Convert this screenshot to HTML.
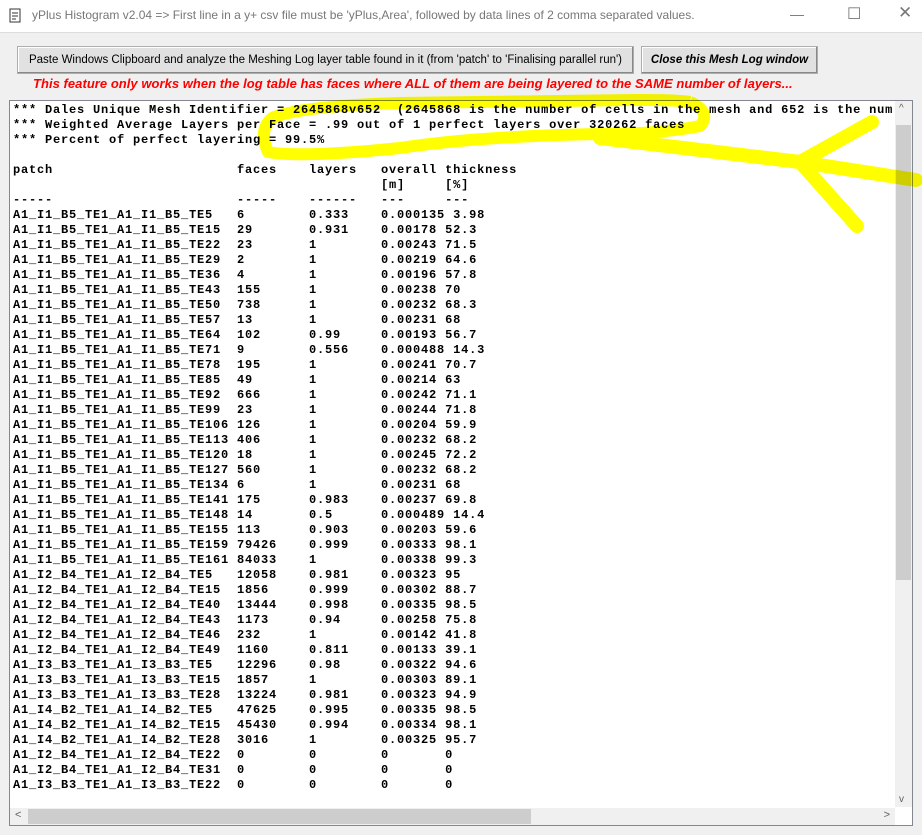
<!DOCTYPE html>
<html><head><meta charset="utf-8"><style>
body{margin:0;width:922px;height:835px;background:#f0f0f0;position:relative;overflow:hidden;font-family:"Liberation Sans",sans-serif}
.title{position:absolute;left:0;top:0;width:922px;height:32px;background:#fff;border-bottom:1px solid #ddd}
.title span{position:absolute;left:32px;top:8px;font-size:12px;color:#777}
.btn{position:absolute;background:#e1e1e1;border:1px solid #adadad;font-size:11.5px;text-align:center;line-height:26px;box-shadow:inset -1px -1px #888,inset 1px 1px #fff}
.red{position:absolute;left:33px;top:76px;color:#f00;font-weight:bold;font-style:italic;font-size:13px;letter-spacing:0.04px}
.box{position:absolute;left:9px;top:100px;width:902px;height:724px;background:#fff;border:1px solid #828790;overflow:hidden}
pre{position:absolute;left:3px;top:2px;margin:0;font-family:"Liberation Mono",monospace;font-size:12px;letter-spacing:0.8px;line-height:15px;font-weight:bold;color:#000;white-space:pre}
.vs{position:absolute;right:0;top:0;width:17px;height:706px;background:#f0f0f0}
.vt{position:absolute;left:1px;top:24px;width:15px;height:455px;background:#cdcdcd}
.hs{position:absolute;left:0;bottom:0;width:885px;height:17px;background:#f0f0f0}
.ht{position:absolute;left:18px;top:1px;width:503px;height:15px;background:#cdcdcd}
</style></head><body>
<div class="title"><svg style="position:absolute;left:8px;top:8px" width="14" height="16"><rect x="2" y="1" width="10" height="13" fill="#fff" stroke="#333"/><path d="M4 5h6M4 8h6M4 11h4" stroke="#333"/></svg><span>yPlus Histogram v2.04 =&gt; First line in a y+ csv file must be 'yPlus,Area', followed by data lines of 2 comma separated values.</span>
<span style="left:790px;top:6px;font-size:14px">—</span><span style="left:847px;top:4px;font-size:16px">☐</span><span style="left:898px;top:3px;font-size:17px">✕</span></div>
<div class="btn" style="left:17px;top:46px;width:615px;height:26px">Paste Windows Clipboard and analyze the Meshing Log layer table found in it (from 'patch' to 'Finalising parallel run')</div>
<div class="btn" style="left:641px;top:46px;width:175px;height:26px;font-weight:bold;font-style:italic">Close this Mesh Log window</div>
<div class="red">This feature only works when the log table has faces where ALL of them are being layered to the SAME number of layers...</div>
<div class="box">
<pre>*** Dales Unique Mesh Identifier = 2645868v652  (2645868 is the number of cells in the mesh and 652 is the num
*** Weighted Average Layers per Face = .99 out of 1 perfect layers over 320262 faces
*** Percent of perfect layering = 99.5%

patch                       faces    layers   overall thickness
                                              [m]     [%]
-----                       -----    ------   ---     ---
A1_I1_B5_TE1_A1_I1_B5_TE5   6        0.333    0.000135 3.98
A1_I1_B5_TE1_A1_I1_B5_TE15  29       0.931    0.00178 52.3
A1_I1_B5_TE1_A1_I1_B5_TE22  23       1        0.00243 71.5
A1_I1_B5_TE1_A1_I1_B5_TE29  2        1        0.00219 64.6
A1_I1_B5_TE1_A1_I1_B5_TE36  4        1        0.00196 57.8
A1_I1_B5_TE1_A1_I1_B5_TE43  155      1        0.00238 70
A1_I1_B5_TE1_A1_I1_B5_TE50  738      1        0.00232 68.3
A1_I1_B5_TE1_A1_I1_B5_TE57  13       1        0.00231 68
A1_I1_B5_TE1_A1_I1_B5_TE64  102      0.99     0.00193 56.7
A1_I1_B5_TE1_A1_I1_B5_TE71  9        0.556    0.000488 14.3
A1_I1_B5_TE1_A1_I1_B5_TE78  195      1        0.00241 70.7
A1_I1_B5_TE1_A1_I1_B5_TE85  49       1        0.00214 63
A1_I1_B5_TE1_A1_I1_B5_TE92  666      1        0.00242 71.1
A1_I1_B5_TE1_A1_I1_B5_TE99  23       1        0.00244 71.8
A1_I1_B5_TE1_A1_I1_B5_TE106 126      1        0.00204 59.9
A1_I1_B5_TE1_A1_I1_B5_TE113 406      1        0.00232 68.2
A1_I1_B5_TE1_A1_I1_B5_TE120 18       1        0.00245 72.2
A1_I1_B5_TE1_A1_I1_B5_TE127 560      1        0.00232 68.2
A1_I1_B5_TE1_A1_I1_B5_TE134 6        1        0.00231 68
A1_I1_B5_TE1_A1_I1_B5_TE141 175      0.983    0.00237 69.8
A1_I1_B5_TE1_A1_I1_B5_TE148 14       0.5      0.000489 14.4
A1_I1_B5_TE1_A1_I1_B5_TE155 113      0.903    0.00203 59.6
A1_I1_B5_TE1_A1_I1_B5_TE159 79426    0.999    0.00333 98.1
A1_I1_B5_TE1_A1_I1_B5_TE161 84033    1        0.00338 99.3
A1_I2_B4_TE1_A1_I2_B4_TE5   12058    0.981    0.00323 95
A1_I2_B4_TE1_A1_I2_B4_TE15  1856     0.999    0.00302 88.7
A1_I2_B4_TE1_A1_I2_B4_TE40  13444    0.998    0.00335 98.5
A1_I2_B4_TE1_A1_I2_B4_TE43  1173     0.94     0.00258 75.8
A1_I2_B4_TE1_A1_I2_B4_TE46  232      1        0.00142 41.8
A1_I2_B4_TE1_A1_I2_B4_TE49  1160     0.811    0.00133 39.1
A1_I3_B3_TE1_A1_I3_B3_TE5   12296    0.98     0.00322 94.6
A1_I3_B3_TE1_A1_I3_B3_TE15  1857     1        0.00303 89.1
A1_I3_B3_TE1_A1_I3_B3_TE28  13224    0.981    0.00323 94.9
A1_I4_B2_TE1_A1_I4_B2_TE5   47625    0.995    0.00335 98.5
A1_I4_B2_TE1_A1_I4_B2_TE15  45430    0.994    0.00334 98.1
A1_I4_B2_TE1_A1_I4_B2_TE28  3016     1        0.00325 95.7
A1_I2_B4_TE1_A1_I2_B4_TE22  0        0        0       0
A1_I2_B4_TE1_A1_I2_B4_TE31  0        0        0       0
A1_I3_B3_TE1_A1_I3_B3_TE22  0        0        0       0</pre>
<div class="vs"><span style="position:absolute;left:4px;top:2px;font-size:10px;color:#606060">^</span><div class="vt"></div><span style="position:absolute;left:4px;bottom:2px;font-size:10px;color:#606060">v</span></div>
<div class="hs"><span style="position:absolute;left:5px;top:1px;font-size:11px;color:#606060">&lt;</span><div class="ht"></div><span style="position:absolute;right:5px;top:1px;font-size:11px;color:#606060">&gt;</span></div>
</div>
<svg style="position:absolute;left:0;top:0;mix-blend-mode:multiply" width="922" height="835">
<path d="M690 102 Q712 112 700 126 Q660 134 600 134 Q480 136 400 148 Q300 158 268 152 Q258 130 272 118 Q300 106 400 103 L640 100 Q680 100 690 102" fill="none" stroke="#ffff00" stroke-width="12" stroke-linejoin="round"/>
<path d="M600 138 L800 162 L916 180 M800 162 L872 122 M800 162 L857 226" fill="none" stroke="#ffff00" stroke-width="14" stroke-linecap="round" stroke-linejoin="round"/>
</svg>
</body></html>
